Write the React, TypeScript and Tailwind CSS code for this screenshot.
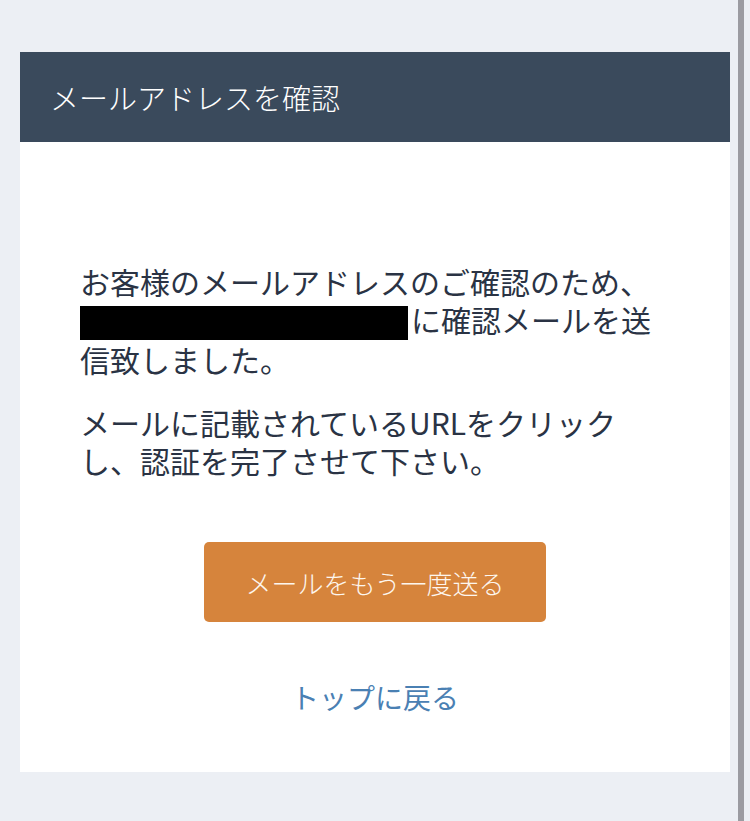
import React from "react";

const font = {
  fontFamily: '"Noto Sans CJK JP", "Noto Sans", sans-serif',
};

const App = () => {
  return (
    <div className="flex min-h-[821px] bg-[#eceff4]" style={font}>
      <div className="w-[738px] pl-[20px] pr-[8px] pt-[52px]">
        <div className="bg-white">
          <div className="flex h-[90px] items-center bg-[#3a4a5c] pl-[30px]">
            <h1 className="text-[29px] font-light leading-none text-white">
              メールアドレスを確認
            </h1>
          </div>
          <div className="px-[60px] pt-[120px] pb-[56px] text-[#2a3344]">
            <p className="text-[30px] leading-[38px]">
              お客様のメールアドレスのご確認のため、
              <br />
              <span className="mr-[3px] inline-block h-[34px] w-[328px] bg-black align-[-8px]" />
              に確認メールを送
              <br />
              信致しました。
            </p>
            <p className="mt-[25px] text-[30px] leading-[38px]">
              メールに記載されているURLをクリック
              <br />
              し、認証を完了させて下さい。
            </p>
            <div className="mt-[63px] flex justify-center">
              <button className="flex h-[80px] w-[342px] items-center justify-center rounded-[5px] bg-[#d6843c] text-[26px] font-light text-[#fdf6ee]">
                メールをもう一度送る
              </button>
            </div>
            <div className="mt-[56px] flex justify-center">
              <a href="#" className="text-[28px] leading-[38px] text-[#4a80b3]">
                トップに戻る
              </a>
            </div>
          </div>
        </div>
      </div>
      <div className="w-[6px] self-stretch bg-[#9b9ba1]" />
      <div className="flex-1" />
    </div>
  );
};

export default App;
